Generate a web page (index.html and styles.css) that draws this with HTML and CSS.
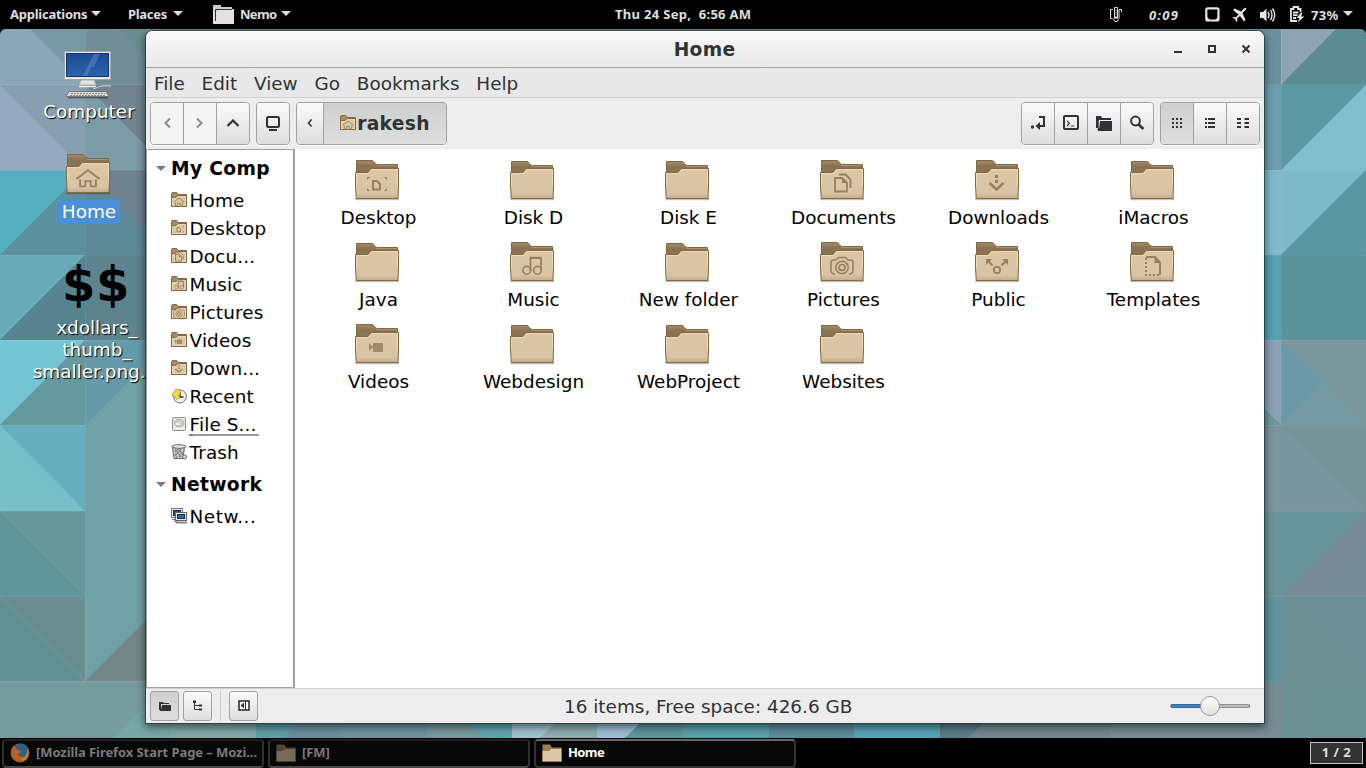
FILE: index.html
```html
<!DOCTYPE html>
<html lang="en">
<head>
<meta charset="utf-8">
<title>Home</title>
<link rel="stylesheet" href="styles.css">
</head>
<body>
<svg class="defs" width="0" height="0">
  <defs>
    <linearGradient id="front" x1="0" y1="0" x2="0" y2="1"><stop offset="0" stop-color="#dcc6a4"/><stop offset=".82" stop-color="#d8c4a6"/><stop offset="1" stop-color="#c3ab88"/></linearGradient>
    <linearGradient id="back" x1="0" y1="0" x2="0" y2="1"><stop offset="0" stop-color="#a58c68"/><stop offset=".3" stop-color="#8a7353"/><stop offset="1" stop-color="#8a7353"/></linearGradient>
    <linearGradient id="screen" x1="0" y1="0" x2="0" y2="1"><stop offset="0" stop-color="#1c4c93"/><stop offset="1" stop-color="#2b63ad"/></linearGradient>
    <symbol id="front-panel" viewBox="0 0 46 43">
      <path d="M1.5 40H45" stroke="#000" stroke-opacity=".25" stroke-width="2.500"/>
      <path d="M1.5 13.5H13.5C15.5 13.5 15.5 9.5 18 9.5H44.5V27L44 39.5H2.2L1.5 27Z" fill="url(#front)" stroke="#86693f"/>
      <path d="M2.5 27V14.5H14C16.4 14.5 16 10.5 18.5 10.5H43.5V27" fill="none" stroke="#f0e0c4" stroke-opacity=".75"/>
    </symbol>
    <symbol id="folder-tall" viewBox="0 0 46 43">
      <path d="M2.5 20V1.5H18C20 1.5 20.500 5.500 23.500 5.500H43.500V20Z" fill="url(#back)" stroke="#84673e"/>
      <path d="M22.500 6.500H43" stroke="#a99372"/>
      <use href="#front-panel" width="46" height="43"/>
    </symbol>
    <symbol id="folder" viewBox="0 0 46 43">
      <path d="M2.500 20V2.500H18C20 2.500 20.500 6.500 23.500 6.500H43.500V20Z" fill="url(#back)" stroke="#84673e"/>
      <path d="M22.500 7.500H43" stroke="#a99372"/>
      <use href="#front-panel" width="46" height="43"/>
    </symbol>
    <symbol id="mini-folder" viewBox="0 0 16 16">
      <path d="M.5 14.500V2Q.5 .5 2 .5H5.500L7.500 2.500H15.500V14.500Z" fill="#a78b62" stroke="#86693f"/>
      <path d="M.5 5.500H5L7 3.500H15.500V14.500H.5Z" fill="#dcc8a8" stroke="#86693f"/>
      <path d="M1.500 13.500V6.500H5.500L7.500 4.500H14.500V13.500Z" fill="none" stroke="#eadbc2" stroke-opacity=".7"/>
    </symbol>
    <symbol id="g-home" viewBox="0 0 24 20"><path d="M1 11.500 12 3 23 11.500M4.500 12V18.500H9.500V13.500H14.500V18.500H19.500V12" fill="none" stroke="#95805f" stroke-width="1.800"/></symbol>
    <symbol id="g-desktop" viewBox="0 0 24 20"><path d="M2 6V3H5ZM22 6V3H19ZM2 14V17H5ZM22 14V17H19Z" fill="#95805f"/><path d="M8 7H12L15 10V15.500H8Z" fill="none" stroke="#95805f" stroke-width="2"/></symbol>
    <symbol id="g-docs" viewBox="0 0 24 20"><path d="M5 5H12L17 9.500V18.500H5Z M9 1.500H15.500L20.500 6.500V15" fill="none" stroke="#95805f" stroke-width="1.800"/><path d="M12 5V10H17Z" fill="#95805f"/></symbol>
    <symbol id="g-down" viewBox="0 0 24 20"><path d="M10.500 2h3v3h-3zM10.500 7h3v3h-3z" fill="#95805f"/><path d="M5 10 12 16.500 19 10" fill="none" stroke="#95805f" stroke-width="2.500"/></symbol>
    <symbol id="g-music" viewBox="0 0 24 20"><path d="M10.500 15V2.200H21V15M10.500 2.500H21" fill="none" stroke="#95805f" stroke-width="1.800"/><circle cx="6.800" cy="14.800" r="3.900" fill="none" stroke="#95805f" stroke-width="1.600"/><circle cx="17.500" cy="14.800" r="3.900" fill="none" stroke="#95805f" stroke-width="1.600"/></symbol>
    <symbol id="g-pics" viewBox="0 0 24 20"><path d="M5 18.500Q1 18.500 1 15V7Q1 4.500 3.500 4.500H6L8.500 2H15.500L18 4.500H20.500Q23 4.500 23 7V15Q23 18.500 19 18.500" fill="none" stroke="#95805f" stroke-width="1.500"/><circle cx="12" cy="12" r="6.200" fill="none" stroke="#95805f" stroke-width="1.500"/><circle cx="12" cy="12" r="3" fill="none" stroke="#95805f" stroke-width="1.700"/></symbol>
    <symbol id="g-public" viewBox="0 0 24 20"><path d="M1 3H7L1 9ZM17 3H23V9Z" fill="#95805f"/><path d="M3 5 7.500 9.500M21 5 16.500 9.500" stroke="#95805f" stroke-width="2"/><circle cx="12" cy="14" r="3.200" fill="none" stroke="#95805f" stroke-width="1.800"/></symbol>
    <symbol id="g-templates" viewBox="0 0 24 20"><path d="M6 1H15L20 6.500V19" fill="none" stroke="#95805f" stroke-width="2"/><path d="M14.500 1V7H20.500Z" fill="#95805f"/><path d="M6 2V20M5 19H20" fill="none" stroke="#95805f" stroke-width="2" stroke-dasharray="2 2"/></symbol>
    <symbol id="g-video" viewBox="0 0 24 20"><path d="M4 6 8 10 4 14ZM8 6H18V15H8V11.500L7 10.500 8 9.500Z" fill="#a08b69"/></symbol>
  </defs>
</svg>

<header class="panel">
  <span class="p-item p-apps">Applications</span><i class="tri"></i>
  <span class="p-item p-places">Places</span><i class="tri"></i>
  <svg class="p-folder" width="23" height="21"><path d="M1 1H9V3H20V6H4V18H1Z" fill="#ccc"/><path d="M1 3V20H22V5H6Q4 5 4 7V16" fill="#e2e2e2"/><path d="M3.500 17V5.500H20" fill="none" stroke="#333"/></svg>
  <span class="p-item p-nemo">Nemo</span><i class="tri"></i>
  <span class="clock">Thu 24 Sep,&nbsp; 6:56 AM</span>
  <div class="tray">
    <svg width="14" height="17" viewBox="0 0 14 17" fill="none" stroke="#ddd"><path d="M4 3.500H1.500V12.500H3.500M10 12.500V3.500H12.500V6M5.500 12V1.500H8.500V12"/><circle cx="7" cy="13.500" r="2.200"/><path d="M7 4V13" stroke-dasharray="1 1"/></svg>
    <em class="timer">0:09</em>
    <svg class="t-sq" width="15" height="15"><rect x="1.300" y="1.300" width="12.200" height="12.200" rx="1.500" fill="none" stroke="#e5e5e5" stroke-width="2.200"/><path d="M2 10V13H5ZM13 10V13H10Z" fill="#e5e5e5"/></svg>
    <svg class="t-air" width="16" height="16"><path d="M1 3 2.500 1.500 9 4.500 12.500 1Q15 0 14 2.500L10.500 6 13.500 13 12 14.500 8 9 5 11.500 5.500 14 4.500 15 3 12 .5 10.800 1.500 10 4 10.300 6.500 7.500Z" fill="#e5e5e5"/></svg>
    <svg class="t-vol" width="17" height="16"><path d="M1 5H4L7.500 1.500V14.500L4 11H1Z" fill="#e5e5e5"/><path d="M9 5Q11 8 9 11M11.500 3Q14.500 8 11.500 13M13.500 1.500Q18 8 13.500 14.500" stroke="#e5e5e5" stroke-width="1.400" fill="none"/></svg>
    <svg class="t-bat" width="16" height="17"><path d="M11.500 6V3H9V1H4.500V3H2V15H8M4 6.500H9.500M4 9.200H8.500M4 12H7" fill="none" stroke="#e5e5e5" stroke-width="1.800"/><path d="M12 6.500 7.500 12H10.500L8.500 16.500 15.500 10.500H12L13.500 6.500Z" fill="#e5e5e5"/></svg>
    <span class="pct">73%</span><i class="tri"></i>
  </div>
</header>

<main class="desktop">
  <svg class="wall" width="1366" height="709" viewBox="0 29 1366 709">
    <rect y="29" width="1366" height="709" fill="#6f979f"/>
    <path fill="#8ca6b7" d="M0 29H85V85H0Z"/><path fill="#7799a6" d="M30 29H85V84Z"/>
    <path fill="#728d98" d="M85 29H146V85H85Z"/><path fill="#678d8f" d="M118 29H146V57Z"/>
    <path fill="#879fb1" d="M0 85H85V170Z"/><path fill="#95a9be" d="M0 85 85 170H0Z"/>
    <path fill="#7b9ba7" d="M85 85 170 170H85Z"/><path fill="#71848f" d="M85 85H170V170Z"/>
    <path fill="#56afbf" d="M0 170H85L0 255Z"/><path fill="#5d909d" d="M85 170V255H0Z"/>
    <path fill="#5e8996" d="M85 170 170 255H85Z"/><path fill="#6e8290" d="M85 170H170V255Z"/>
    <path fill="#69aab8" d="M0 255H85L0 340Z"/><path fill="#57838f" d="M85 255V340H0Z"/>
    <path fill="#5d838e" d="M85 255H170V340H85Z"/>
    <path fill="#75c6d5" d="M0 340H85L0 425Z"/><path fill="#66999e" d="M85 340V425H0Z"/>
    <path fill="#659aaa" d="M85 340H170L85 425Z"/><path fill="#70a1a6" d="M170 340V681H85V425Z"/>
    <path fill="#67aebc" d="M0 425H85V511Z"/><path fill="#75c0c9" d="M0 425 85 511H0Z"/>
    <path fill="#66979a" d="M0 511H85V596Z"/><path fill="#609699" d="M0 511 85 596H0Z"/>
    <path fill="#698d90" d="M0 596H85V681Z"/><path fill="#629193" d="M0 596 85 681H0Z"/>
    <path fill="#738789" d="M85 681 170 596V681Z"/>
    <path fill="#769b9e" d="M0 681H170V738H0Z"/><path fill="#76a7a6" d="M113 738 170 681V738Z"/>
    <path fill="#80a8a8" d="M170 681H256V738H170Z"/><path fill="#5f9ea7" d="M256 681H341V738H256Z"/><path fill="#6b8f9f" d="M284 738 341 681V738Z"/>
    <path fill="#7190a0" d="M341 681H427V738H341Z"/><path fill="#76999d" d="M427 681H512V738H427Z"/><path fill="#5ea5b1" d="M427 681H512V738H484Z"/>
    <path fill="#a1c2cb" d="M512 681H597V738H512Z"/><path fill="#8eacb0" d="M540 738 597 681V738Z"/>
    <path fill="#9dbed5" d="M597 681H683V738H597Z"/><path fill="#5d9598" d="M625 738 683 681V738Z"/>
    <path fill="#589fa9" d="M683 681H769V738H683Z"/><path fill="#5d8b99" d="M769 681H854V738H769Z"/>
    <path fill="#55a3b4" d="M854 681H940V738H854Z"/><path fill="#587d85" d="M940 681H1025V738H940Z"/><path fill="#74888f" d="M968 738 1025 681H1110V738Z"/><path fill="#778c94" d="M1110 681H1281V738H1110Z"/>
    <path fill="#6b909d" d="M1260 29H1281V85H1260Z"/><path fill="#8da4b5" d="M1281 29H1336L1281 85Z"/><path fill="#5a8c92" d="M1281 85 1336 29H1366V85Z"/>
    <path fill="#6b9fae" d="M1260 85H1281V170H1260Z"/><path fill="#5c98a3" d="M1281 85H1366L1281 170Z"/><path fill="#7fbfce" d="M1366 85V170H1281Z"/>
    <path fill="#7ebac9" d="M1260 170H1366L1281 255H1260Z"/><path fill="#5b97a2" d="M1366 170V255H1281Z"/>
    <path fill="#56a1b0" d="M1260 255H1281V340H1260Z"/><path fill="#599199" d="M1281 255H1366V340H1281Z"/>
    <path fill="#8da2b4" d="M1260 340H1281V425L1260 404Z"/><path fill="#7a979e" d="M1281 340H1366V425Z"/><path fill="#749ba4" d="M1281 340 1366 425H1281Z"/><path fill="#6999aa" d="M1281 340 1323 382 1281 425Z"/>
    <path fill="#7b959f" d="M1260 425H1366V511H1260Z"/><path fill="#78929a" d="M1281 425H1366V511Z"/>
    <path fill="#6a949b" d="M1260 511H1366L1281 596H1260Z"/><path fill="#758b96" d="M1366 511V596H1281Z"/>
    <path fill="#5f949e" d="M1260 596H1281V681H1260Z"/><path fill="#6b8e95" d="M1281 596H1366V681Z"/><path fill="#6d9092" d="M1281 596 1366 681H1281Z"/>
    <path fill="#6b9094" d="M1281 681H1366V738H1281Z"/>
    <g stroke="#fff" stroke-opacity=".07" fill="none"><path d="M85.500 29V681M0 84.500H146M0 170.500H146M0 255.500H146M0 340.500H146M0 425.500H85M0 511.500H85M0 596.500H85M0 681.500H146M0 425 85 511M0 511 85 596M0 596 85 681M28 738 85 681M1281.500 29V425M1264 84.500H1366M1264 170.500H1366M1264 255.500H1366M1264 340.500H1366M1264 425.500H1366M1264 511.500H1366M1264 596.500H1366M1281 340 1366 255"/></g>
  </svg>

  <figure class="d-icon d-computer">
    <svg width="50" height="50" viewBox="0 0 50 50"><path d="M5 47.500H45" stroke="#000" stroke-opacity=".4" stroke-width="2"/><rect x="1.500" y="1.500" width="46" height="28" rx="1" fill="#e8e8e3" stroke="#a5a8a3"/><rect x="3.500" y="3.500" width="42" height="23" fill="url(#screen)" stroke="#0d3474"/><path d="M20 26 31 4H35L24 26ZM28 17 35 4H37L31 17Z" fill="#7da3d6" opacity=".35"/><path d="M18 30H31L33 35H16Z" fill="#e5e5e0" stroke="#aaa"/><path d="M16 36.500H33" stroke="#eee" stroke-width="1.500"/><path d="M30 39C35 38 34 35 48 36" fill="none" stroke="#ddd"/><path d="M6 41.500H43L46 46.500H3Z" fill="#dadad4" stroke="#777"/><path d="M8 43.500H42M7 45.500H43" stroke="#85857f" stroke-dasharray="2 1"/></svg>
    <figcaption>Computer</figcaption>
  </figure>
  <figure class="d-icon d-home">
    <svg width="46" height="43"><use href="#folder-tall" width="46" height="43"/><use href="#g-home" x="9.500" y="14" width="27" height="21"/></svg>
    <figcaption class="selected">Home</figcaption>
  </figure>
  <figure class="d-icon d-file">
    <div class="thumb">$$</div>
    <figcaption>xdollars_<br>thumb_<br><span class="last">smaller.png...</span></figcaption>
  </figure>

  <section class="window">
    <div class="titlebar"><span class="title">Home</span>
      <svg class="winctl" width="84" height="12" stroke="#2e3436" fill="none" stroke-width="2"><path d="M3 9H11"/><rect x="38" y="3" width="6" height="6"/><path d="M71.500 2.500 78.500 9.500M78.500 2.500 71.500 9.500"/></svg>
    </div>
    <nav class="menubar"><span>File</span><span>Edit</span><span>View</span><span>Go</span><span>Bookmarks</span><span>Help</span></nav>
    <div class="toolbar">
      <div class="group nav">
        <button class="flat"><svg width="16" height="16"><path d="M11 3.500 6.500 8 11 12.500" fill="none" stroke="#8b8e8f" stroke-width="2"/></svg></button>
        <button class="flat"><svg width="16" height="16"><path d="M5 3.500 9.500 8 5 12.500" fill="none" stroke="#8b8e8f" stroke-width="2"/></svg></button>
        <button><svg width="16" height="16"><path d="M2.500 11 8 5.500 13.500 11" fill="none" stroke="#2e3436" stroke-width="2.200"/></svg></button>
      </div>
      <div class="group comp"><button><svg width="16" height="16"><rect x="2" y="2" width="12" height="10" rx="1.500" fill="none" stroke="#2e3436" stroke-width="2"/><path d="M4 15H12" stroke="#2e3436" stroke-width="2"/></svg></button></div>
      <div class="group path">
        <button class="narrow"><svg width="8" height="10"><path d="M5.500 1.500 2.500 5 5.500 8.500" fill="none" stroke="#2e3436" stroke-width="1.600"/></svg></button>
        <button class="crumb on"><svg width="17" height="16"><use href="#mini-folder" width="16" height="16"/><use href="#g-home" x="2" y="4.500" width="12" height="10"/></svg><b>rakesh</b></button>
      </div>
      <div class="group tools">
        <button><svg width="16" height="16"><path d="M9 2H14V11H9" fill="none" stroke="#2e3436" stroke-width="2"/><path d="M10 7V15L5.500 11Z" fill="#2e3436"/><circle cx="2.500" cy="12" r="1.700" fill="#2e3436"/></svg></button>
        <button><svg width="16" height="16"><rect x="1" y="1" width="14" height="13" rx="1" fill="none" stroke="#2e3436" stroke-width="2"/><path d="M4 6 6.500 8.500 4 11M8 11H11" fill="none" stroke="#2e3436" stroke-width="1.100"/></svg></button>
        <button><svg width="17" height="16"><path d="M0 1H5L6 3H15V5H3V13H0Z" fill="#2e3436"/><path d="M4 6H16V16H2Q1 14 2 13H3Z" fill="#2e3436"/><path d="M3 13V5.500H15" fill="none" stroke="#f0f0f0" stroke-width=".5"/></svg></button>
        <button><svg width="16" height="16"><circle cx="6.500" cy="6" r="4.400" fill="none" stroke="#2e3436" stroke-width="2"/><path d="M9.500 9.500 14.500 14" stroke="#2e3436" stroke-width="2.500"/></svg></button>
      </div>
      <div class="group views">
        <button class="on"><svg width="12" height="12"><path d="M1 2H11M1 6H11M1 10H11" stroke="#2e3436" stroke-width="2" stroke-dasharray="2 2"/></svg></button>
        <button><svg width="12" height="12"><path d="M1 2H3M4 2H11M1 6H3M4 6H11M1 10H3M4 10H11" stroke="#2e3436" stroke-width="2"/></svg></button>
        <button><svg width="14" height="12"><path d="M1 2H5M8.500 2H13M1 6H5M8.500 6H13M1 10H5M8.500 10H13" stroke="#2e3436" stroke-width="2"/></svg></button>
      </div>
    </div>
    <div class="content">
      <aside class="sidebar">
        <h2><i></i>My Comp</h2>
        <ul>
          <li><svg width="16" height="16"><use href="#mini-folder" width="16" height="16"/><use href="#g-home" x="2" y="4.500" width="12" height="10"/></svg><span>Home</span></li>
          <li><svg width="16" height="16"><use href="#mini-folder" width="16" height="16"/><use href="#g-desktop" x="2" y="4" width="12" height="10"/></svg><span>Desktop</span></li>
          <li><svg width="16" height="16"><use href="#mini-folder" width="16" height="16"/><use href="#g-docs" x="2" y="4" width="12" height="10"/></svg><span>Docu...</span></li>
          <li><svg width="16" height="16"><use href="#mini-folder" width="16" height="16"/><use href="#g-music" x="2" y="4" width="12" height="10"/></svg><span>Music</span></li>
          <li><svg width="16" height="16"><use href="#mini-folder" width="16" height="16"/><use href="#g-pics" x="2" y="4" width="12" height="10"/></svg><span>Pictures</span></li>
          <li><svg width="16" height="16"><use href="#mini-folder" width="16" height="16"/><use href="#g-video" x="2" y="4.500" width="12" height="10"/></svg><span>Videos</span></li>
          <li><svg width="16" height="16"><use href="#mini-folder" width="16" height="16"/><use href="#g-down" x="2" y="4" width="12" height="10"/></svg><span>Down...</span></li>
          <li><svg width="16" height="16"><circle cx="9" cy="8.500" r="6.500" fill="#eceeeb" stroke="#777"/><path d="M9 4V9H12.500" fill="none" stroke="#333" stroke-width="1.300"/><path d="M5 1 9 2.500V7H7.500L8.500 10 5.500 11.500 4 8.500.8 7.500Z" fill="#f2de49" stroke="#b99a12" stroke-width=".8"/></svg><span>Recent</span></li>
          <li><svg width="16" height="16"><rect x="1.500" y="1.500" width="13" height="13" rx="1" fill="#e5e5e5" stroke="#8f8f8f"/><ellipse cx="8" cy="7" rx="4.500" ry="3.500" fill="#d2d2d2" stroke="#aaa"/><path d="M5 8H9M3 12.500H13" stroke="#fff"/></svg><span class="disk">File S...</span></li>
          <li><svg width="16" height="16"><path d="M1.500 3 3 14.500H12L13.500 3Z" fill="#c8cac6" stroke="#666"/><path d="M4 5 10 13M7 4 12 11M4 10 6 14M11 4 4 12M13 7 8 13M8 4 4 8" stroke="#777"/><ellipse cx="8" cy="2.500" rx="7" ry="1.800" fill="#e5e5e2" stroke="#666"/><circle cx="13.500" cy="13" r="2" fill="#ddd" stroke="#666"/></svg><span>Trash</span></li>
        </ul>
        <h2 class="second"><i></i>Network</h2>
        <ul><li><svg width="16" height="16"><rect x=".5" y=".5" width="11" height="9" fill="#e8e8e4" stroke="#777"/><rect x="2.500" y="2.500" width="7" height="5" fill="#264f91" stroke="#0e2c60"/><path d="M1 11.500H5M3 13.500H6" stroke="#777"/><rect x="4.500" y="4.500" width="11" height="8" fill="#e8e8e4" stroke="#666"/><rect x="6.500" y="6.500" width="7" height="4" fill="#3465a4" stroke="#0e2c60"/><path d="M5 14.500H16" stroke="#888" stroke-width="2"/></svg><span class="net">Netw...</span></li></ul>
      </aside>
      <div class="files">
        <figure><svg width="46" height="43"><use href="#folder-tall" width="46" height="43"/><use href="#g-desktop" x="11" y="15" width="24" height="20"/></svg><figcaption>Desktop</figcaption></figure>
        <figure><svg width="46" height="43"><use href="#folder" width="46" height="43"/></svg><figcaption>Disk D</figcaption></figure>
        <figure><svg width="46" height="43"><use href="#folder" width="46" height="43"/></svg><figcaption>Disk E</figcaption></figure>
        <figure><svg width="46" height="43"><use href="#folder-tall" width="46" height="43"/><use href="#g-docs" x="11" y="14" width="24" height="20"/></svg><figcaption>Documents</figcaption></figure>
        <figure><svg width="46" height="43"><use href="#folder-tall" width="46" height="43"/><use href="#g-down" x="10.500" y="14" width="24" height="20"/></svg><figcaption>Downloads</figcaption></figure>
        <figure><svg width="46" height="43"><use href="#folder" width="46" height="43"/></svg><figcaption>iMacros</figcaption></figure>
        <figure><svg width="46" height="43"><use href="#folder" width="46" height="43"/></svg><figcaption>Java</figcaption></figure>
        <figure><svg width="46" height="43"><use href="#folder-tall" width="46" height="43"/><use href="#g-music" x="11" y="14.500" width="24" height="20"/></svg><figcaption>Music</figcaption></figure>
        <figure><svg width="46" height="43"><use href="#folder" width="46" height="43"/></svg><figcaption>New folder</figcaption></figure>
        <figure><svg width="46" height="43"><use href="#folder-tall" width="46" height="43"/><use href="#g-pics" x="11" y="14.500" width="24" height="20"/></svg><figcaption>Pictures</figcaption></figure>
        <figure><svg width="46" height="43"><use href="#folder-tall" width="46" height="43"/><use href="#g-public" x="11" y="15" width="24" height="20"/></svg><figcaption>Public</figcaption></figure>
        <figure><svg width="46" height="43"><use href="#folder-tall" width="46" height="43"/><use href="#g-templates" x="11" y="15" width="24" height="20"/></svg><figcaption>Templates</figcaption></figure>
        <figure><svg width="46" height="43"><use href="#folder-tall" width="46" height="43"/><use href="#g-video" x="11" y="14" width="24" height="20"/></svg><figcaption>Videos</figcaption></figure>
        <figure><svg width="46" height="43"><use href="#folder" width="46" height="43"/></svg><figcaption>Webdesign</figcaption></figure>
        <figure><svg width="46" height="43"><use href="#folder" width="46" height="43"/></svg><figcaption>WebProject</figcaption></figure>
        <figure><svg width="46" height="43"><use href="#folder" width="46" height="43"/></svg><figcaption>Websites</figcaption></figure>
      </div>
    </div>
    <footer class="statusbar">
      <button class="on"><svg width="12" height="10"><path d="M0 1H4L5 2H10V3H2V9H0Z" fill="#2e3436"/><path d="M3 4H12V10H1V9H2Z" fill="#2e3436"/></svg></button>
      <button><svg width="12" height="12"><path d="M1 1.500H4M2.500 1V9.500H9M2.500 5.500H9" fill="none" stroke="#2e3436"/><path d="M1 .5H4V3H1ZM7 4.500H10V6.500H7ZM7 8.500H10V10.500H7Z" fill="#2e3436"/></svg></button>
      <i class="sep"></i>
      <button><svg width="12" height="11"><rect x="1" y="1" width="10" height="9" fill="#fff" stroke="#2e3436" stroke-width="1.600"/><path d="M6 2.500V8.500L2.500 5.500ZM7 1H8V10H7Z" fill="#2e3436"/></svg></button>
      <span class="status">16 items, Free space: 426.6 GB</span>
      <div class="slider"><i></i></div>
    </footer>
  </section>
</main>

<footer class="taskbar">
  <div class="task dim"><svg width="20" height="20"><circle cx="10" cy="10" r="9.500" fill="#a8501b"/><circle cx="11" cy="7.500" r="7" fill="#2c5f8e"/><path d="M3 3Q-1 11 4 16 10 21 17 15 20 11 18 5 18 13 13 14 8 14 8 11L12 9Q10 7 7 7Q7 4 3 3Z" fill="#b56320"/><path d="M13 18Q19 14 18 5 17 10 16 12Q15 15 11 16Z" fill="#b69435"/></svg><span>[Mozilla Firefox Start Page – Mozi...</span></div>
  <div class="task dim"><svg width="20" height="18"><path d="M.5 16V.5H8L10 3.500H19.500V16Z" fill="#554734"/><path d="M.5 17.500V6.500H7L9 4.500H19.500V17.500Z" fill="#756b5a" stroke="#4f4029"/></svg><span>[FM]</span></div>
  <div class="task active"><svg width="20" height="18"><path d="M.5 16V.5H8L10 3.500H19.500V16Z" fill="#997c51"/><path d="M.5 17.500V6.500H7L9 4.500H19.500V17.500Z" fill="#dcc8a8" stroke="#9c7c4c"/></svg><span>Home</span></div>
  <div class="pager">1 / 2</div>
</footer>
</body>
</html>
```
FILE: styles.css
```css
* { box-sizing: border-box; }
body { margin: 0; width: 1366px; height: 768px; overflow: hidden; background: #000; display: flex; flex-direction: column; font: 18.4px/22px "DejaVu Sans", sans-serif; color: #000; }
.defs { position: absolute; }
svg { display: block; flex: none; }
figure, h2, ul { margin: 0; padding: 0; }
li { list-style: none; }

.panel { height: 29px; flex: none; display: flex; align-items: center; position: relative; padding-left: 10px; font: 700 13px/28px "Noto Sans", sans-serif; color: #dedede; }
.p-item { white-space: nowrap; margin-top: -1px; }
.p-apps { width: 81px; letter-spacing: -.25px; }
.p-places { width: 45px; margin-left: 27px; letter-spacing: -.3px; }
.p-folder { margin: -1px 0 0 29px; }
.p-nemo { width: 41px; margin-left: 5px; letter-spacing: -.7px; }
.tri { border: 5px solid transparent; border-top: 5px solid #dedede; border-bottom: 0; margin: -2px 0 0; flex: none; }
.clock { position: absolute; left: 615px; top: 0; white-space: nowrap; letter-spacing: .31px; }
.tray { margin-left: auto; display: flex; align-items: center; width: 256px; height: 26px; }
.tray > svg:first-child { margin-left: -1px; margin-right: 1px; }
.timer { margin-left: 25px; width: 31px; letter-spacing: 1.2px; }
.t-sq { margin-left: 25px; }
.t-air { margin-left: 12px; }
.t-vol { margin-left: 11px; }
.t-bat { margin-left: 13px; }
.pct { margin-left: 6px; width: 32px; letter-spacing: .3px; }

.desktop { position: relative; height: 709px; flex: none; overflow: hidden; border-radius: 6px 6px 0 0; }
.d-icon { position: absolute; display: flex; flex-direction: column; align-items: center; text-align: center; color: #fff; text-shadow: 1px 1px 1px #000; white-space: nowrap; }
.d-computer { left: 28px; top: 21px; width: 120px; }
.d-computer figcaption { margin-top: 1px; padding-left: 2px; }
.d-home { left: 28px; top: 124px; width: 120px; }
.d-home figcaption { margin-top: 3px; padding: 2px 4px 1px 5px; margin-left: 1px; }
.selected { background: #4a90d9; border-radius: 3px; text-shadow: none; }
.d-file { left: 27px; top: 227px; width: 140px; }
.thumb { font: 700 48px/56px "DejaVu Sans", sans-serif; color: #000; text-shadow: none; width: 68px; margin-right: 2px; letter-spacing: .5px; }
.d-file figcaption { margin-top: 5px; }
.last { margin-left: -4px; }

.window { position: absolute; left: 146px; top: 2px; width: 1118px; height: 692px; background: #ededed; border-radius: 7px 7px 0 0; box-shadow: 0 0 0 1px rgba(25,50,55,.65), 0 3px 9px 1px rgba(0,0,0,.55); display: flex; flex-direction: column; overflow: visible; color: #2e3436; }
.titlebar { height: 37px; flex: none; border-bottom: 1px solid #a1a1a1; border-radius: 7px 7px 0 0; background: linear-gradient(#f8f8f8, #e9e9e9); display: flex; align-items: center; position: relative; box-shadow: inset 0 1px #fff; }
.title { flex: 1; text-align: center; font-size: 18.67px; font-weight: 700; letter-spacing: .3px; padding: 2px 1px 0 0; }
.winctl { position: absolute; right: 9px; top: 12px; }
.menubar { height: 30px; flex: none; display: flex; align-items: center; gap: 16.8px; padding: 3px 0 0 8px; background: #e8e8e8; border-bottom: 1px solid #d0d0d0; }
.toolbar { height: 51px; flex: none; display: flex; align-items: flex-start; padding: 4px 4px 0; }
button { font: inherit; color: inherit; margin: 0; padding: 0; border: 0; display: flex; align-items: center; justify-content: center; background: linear-gradient(#fafafa, #dedede); }
.group { display: flex; height: 43px; border: 1px solid #a1a1a1; border-radius: 4px; overflow: hidden; box-shadow: 0 1px #fff; }
.group button { flex: 1; border-left: 1px solid #a1a1a1; padding-bottom: 1px; }
.group button:first-child { border-left: 0; flex-basis: -1px; }
.group button.flat { background: #f4f4f4; }
.group button.on { background: linear-gradient(#cfcfcf, #dedede); }
.nav { width: 100px; }
.comp { width: 34px; margin-left: 6px; }
.path { width: 151px; margin-left: 6px; }
.group .narrow { flex: 0 0 26px; }
.crumb b { font-size: 18.67px; letter-spacing: .3px; padding-top: 1px; }
.tools { width: 133px; margin-left: auto; }
.views { width: 100px; margin-left: 6px; }

.content { height: 539px; flex: none; display: flex; background: #fff; color: #000; }
.sidebar { width: 149px; border: 1px solid #a1a1a1; border-right-width: 2px; overflow: hidden; padding-top: 6px; white-space: nowrap; }
.sidebar h2 { height: 28px; margin-bottom: 1px; margin-left: 10px; display: flex; align-items: center; font: 700 18.67px/22px "DejaVu Sans", sans-serif; letter-spacing: .35px; padding-bottom: 2px; }
.sidebar h2 i { border: 5px solid transparent; border-top: 5px solid #777b7d; border-bottom: 0; margin: -1px 5px 0 -1px; }
.sidebar ul { padding-left: 24px; margin-top: 2px; }
.sidebar li { height: 28px; display: flex; align-items: center; gap: 2px; letter-spacing: .12px; }
.sidebar li span { padding: 2px 0 0 .6px; }
.sidebar .second { margin-top: 6px; }
.sidebar .second + ul { margin-top: 2px; }
.sidebar li .net { letter-spacing: .5px; }
.sidebar li .disk { padding: 1px 0 0 .6px; margin-top: 1px; background: linear-gradient(90deg, #4a90d9 4px, #9b9b9b 4px) bottom / 100% 2px no-repeat; width: 70px; }
.files { flex: 1; display: grid; grid-template-columns: repeat(6, 155px); grid-auto-rows: 82px; padding: 10px 0 0 6px; align-content: start; }
.files figure { display: flex; flex-direction: column; align-items: center; }
.files figure svg { margin-right: 3px; }
.files figcaption { margin-top: 5px; }

.statusbar { height: 35px; flex: none; display: flex; align-items: center; border-top: 1px solid #d0d0d0; padding-left: 4px; position: relative; }
.statusbar button { width: 29px; height: 30px; border: 1px solid #a1a1a1; border-radius: 3px; margin-right: 4px; padding-bottom: 1px; }
.statusbar .on { background: linear-gradient(#cfcfcf, #dedede); }
.sep { width: 1px; height: 30px; background: #cfcfcf; margin: 0 8px 0 4px; }
.status { width: 290px; margin-left: 302px; padding-top: 2px; white-space: nowrap; }
.slider { width: 80px; height: 4px; border-radius: 2px; margin-left: auto; margin-right: 14px; background: linear-gradient(90deg, #3b82cc 50%, #bcbcbc 50%); border: 1px solid rgba(60,60,60,.35); display: flex; align-items: center; justify-content: center; }
.slider i { width: 20px; height: 20px; border: 1px solid #999; border-radius: 50%; background: linear-gradient(#fcfcfc, #e2e2e2); flex: none; }

.taskbar { height: 30px; flex: none; display: flex; align-items: center; gap: 4px; padding: 0 3px 0 2px; font: 700 13px/26px "Noto Sans", sans-serif; }
.task { width: 262px; height: 29px; border: 2px solid #303030; border-color: #1e1e1e #303030 #484848; border-radius: 4px; background: #080808; display: flex; align-items: center; gap: 6px; padding-left: 6px; color: #fff; white-space: nowrap; letter-spacing: -.08px; }
.task span { margin-top: -2px; }
.active { letter-spacing: -.6px; border-color: #666 #333 #333; }
.dim { color: #797979; }
.pager { margin-left: auto; width: 53px; height: 22px; border: 1px solid #c8c8c8; background: #333; color: #ddd; text-align: center; line-height: 19px; letter-spacing: .5px; margin-bottom: 1px; }
```
